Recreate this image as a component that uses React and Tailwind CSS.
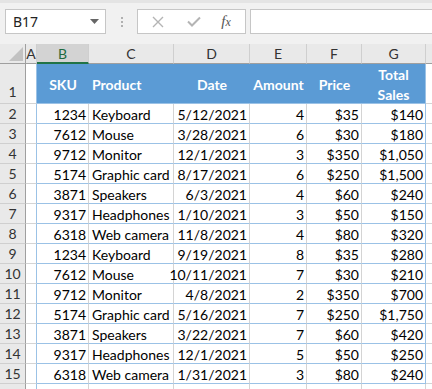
import React from 'react';

const rows = [
  ['1234', 'Keyboard', '5/12/2021', 4, '$35', '$140'],
  ['7612', 'Mouse', '3/28/2021', 6, '$30', '$180'],
  ['9712', 'Monitor', '12/1/2021', 3, '$350', '$1,050'],
  ['5174', 'Graphic card', '8/17/2021', 6, '$250', '$1,500'],
  ['3871', 'Speakers', '6/3/2021', 4, '$60', '$240'],
  ['9317', 'Headphones', '1/10/2021', 3, '$50', '$150'],
  ['6318', 'Web camera', '11/8/2021', 4, '$80', '$320'],
  ['1234', 'Keyboard', '9/19/2021', 8, '$35', '$280'],
  ['7612', 'Mouse', '10/11/2021', 7, '$30', '$210'],
  ['9712', 'Monitor', '4/8/2021', 2, '$350', '$700'],
  ['5174', 'Graphic card', '5/16/2021', 7, '$250', '$1,750'],
  ['3871', 'Speakers', '3/22/2021', 7, '$60', '$420'],
  ['9317', 'Headphones', '12/1/2021', 5, '$50', '$250'],
  ['6318', 'Web camera', '1/31/2021', 3, '$80', '$240'],
];

// column widths B..G
const widths = ['w-[52px]', 'w-[85px]', 'w-[76px]', 'w-[57px]', 'w-[55px]', 'w-[64px]'];
const letters = ['B', 'C', 'D', 'E', 'F', 'G'];

const RowHead = ({ children, tall }) => (
  <div
    className={`w-[26px] shrink-0 bg-[#e9e9e9] border-r border-r-[#9f9f9f] border-b border-b-[#cfcfcf] flex justify-center text-[14px] text-[#333] ${tall ? 'h-[40px] items-end pb-[1px]' : 'h-[20px] items-center'}`}
  >
    {children}
  </div>
);

const ColA = ({ tall }) => (
  <div className={`w-[11px] shrink-0 bg-white border-r border-r-[#9bc2e6] border-b border-b-[#d4d4d4] ${tall ? 'h-[40px]' : 'h-[20px]'}`} />
);

const ColH = ({ tall }) => (
  <div className={`flex-1 bg-white border-b border-b-[#d4d4d4] ${tall ? 'h-[40px]' : 'h-[20px]'}`} />
);

const App = () => {
  return (
    <div className="w-[432px] h-[389px] overflow-hidden bg-white whitespace-nowrap" style={{ fontFamily: 'Lato, "Liberation Sans", sans-serif' }}>
      {/* Formula bar */}
      <div className="h-[44px] bg-[#f1f1f1] border-t-[3px] border-t-[#e4e4e4] flex items-start pt-[6px] pl-[5px]" style={{ fontFamily: '"Noto Sans", "Open Sans", sans-serif' }}>
        <div className="w-[101px] h-[25px] bg-white border border-[#c6c6c6] flex items-center justify-between pl-[7px] pr-[6px] text-[14px] text-[#222]">
          <span>B17</span>
          <svg width="9" height="5" viewBox="0 0 9 5"><path d="M0 0h9L4.5 5z" fill="#666" /></svg>
        </div>
        <div className="w-[31px] h-[25px] flex flex-col items-center justify-center gap-[2px]">
          <span className="w-[2px] h-[2px] bg-[#b0b0b0]" />
          <span className="w-[2px] h-[2px] bg-[#b0b0b0]" />
          <span className="w-[2px] h-[2px] bg-[#b0b0b0]" />
        </div>
        <div className="w-[109px] h-[25px] bg-white border border-[#c6c6c6] flex items-center">
          <div className="w-[40px] flex justify-center">
            <svg width="12" height="12" viewBox="0 0 12 12"><path d="M1 1l10 10M11 1L1 11" stroke="#b4b4b4" strokeWidth="1.4" /></svg>
          </div>
          <div className="w-[32px] flex justify-center">
            <svg width="14" height="11" viewBox="0 0 14 11"><path d="M1 5.5l4 4L13 1.5" stroke="#b4b4b4" strokeWidth="2" fill="none" /></svg>
          </div>
          <div className="flex-1 flex justify-center text-[15px] italic text-[#555] pr-[3px]" style={{ fontFamily: '"Liberation Serif", serif' }}>
            <span>f<span className="text-[12px]">x</span></span>
          </div>
        </div>
        <div className="flex-1 h-[25px] bg-white border border-[#c6c6c6] border-r-0 ml-[4px]" />
      </div>

      {/* Column headers */}
      <div className="flex h-[20px] text-[14px] text-[#333]">
        <div className="w-[26px] shrink-0 bg-[#e9e9e9] border-r border-r-[#9f9f9f] border-b border-b-[#9f9f9f] flex items-end justify-end pr-[2px] pb-[2px]">
          <svg width="14" height="14" viewBox="0 0 14 14"><path d="M14 0V14H0z" fill="#c2c2c2" /></svg>
        </div>
        <div className="w-[11px] shrink-0 bg-[#e9e9e9] border-r border-r-[#cfcfcf] border-b border-b-[#9f9f9f] flex items-center justify-center">A</div>
        {letters.map((l, i) => (
          <div
            key={l}
            className={`${widths[i]} shrink-0 flex items-center justify-center border-r border-r-[#cfcfcf] ${l === 'B' ? 'bg-[#d3d3d3] border-b-2 border-b-[#217346] text-[#1e6b40]' : 'bg-[#e9e9e9] border-b border-b-[#9f9f9f]'}`}
          >
            {l}
          </div>
        ))}
        <div className="flex-1 bg-[#e9e9e9] border-b border-b-[#9f9f9f]" />
      </div>

      {/* Row 1: table header */}
      <div className="flex">
        <RowHead tall>1</RowHead>
        <ColA tall />
        <div className="flex h-[40px] pt-[2px] bg-[#5b9bd5] border-b border-b-[#9bc2e6] border-r border-r-[#9bc2e6] text-white font-bold text-[14px]">
          <div className={`${widths[0]} flex items-center justify-center`}>SKU</div>
          <div className={`${widths[1]} flex items-center pl-[3px]`}>Product</div>
          <div className={`${widths[2]} flex items-center justify-center`}>Date</div>
          <div className={`${widths[3]} flex items-center justify-center`}>Amount</div>
          <div className={`${widths[4]} flex items-center justify-center`}>Price</div>
          <div className="w-[63px] flex items-center justify-center text-center leading-[20px]">Total<br />Sales</div>
        </div>
        <ColH tall />
      </div>

      {/* Data rows */}
      {rows.map((r, idx) => (
        <div key={idx} className="flex text-[14px] text-black">
          <RowHead>{idx + 2}</RowHead>
          <ColA />
          {r.map((v, i) => (
            <div
              key={i}
              className={`${widths[i]} h-[20px] shrink-0 flex items-center pt-[1px] border-b border-b-[#9bc2e6] ${i === 5 ? 'border-r border-r-[#9bc2e6]' : 'border-r border-r-[#d4d4d4]'} ${i === 1 ? 'pl-[3px]' : 'justify-end pr-[2px]'}`}
            >
              {v}
            </div>
          ))}
          <ColH />
        </div>
      ))}

      {/* Row 16, cut off by the window edge */}
      <div className="flex">
        <RowHead />
        <ColA />
        {widths.map((w, i) => (
          <div key={i} className={`${w} h-[20px] shrink-0 border-r border-r-[#d4d4d4] border-b border-b-[#d4d4d4]`} />
        ))}
        <ColH />
      </div>
    </div>
  );
};

export default App;
